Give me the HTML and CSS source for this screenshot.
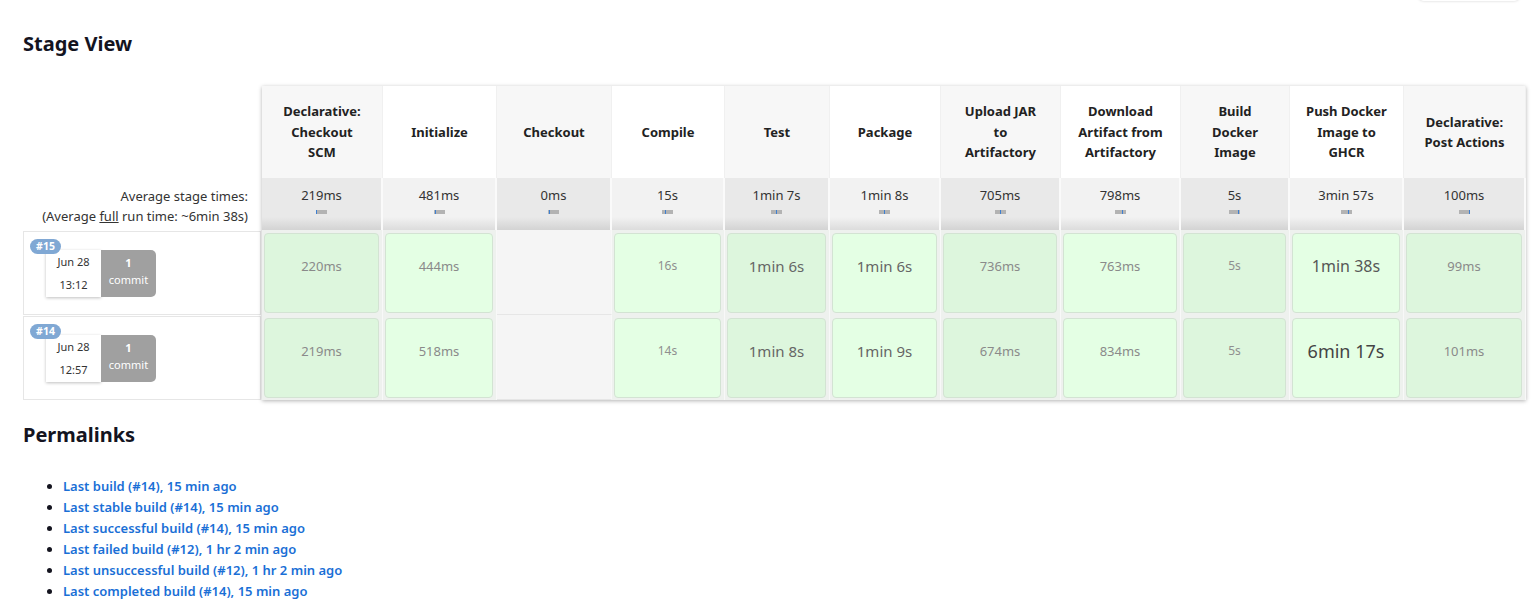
FILE: index.html
```html
<!DOCTYPE html>
<html lang="en">
<head>
<meta charset="utf-8">
<title>Stage View</title>
<link rel="stylesheet" href="styles.css">
</head>
<body>
<div class="page">
  <div class="top-menu"></div>

  <h2 class="section-title">Stage View</h2>

  <div class="stage-view">
    <div class="sv-left">
      <div class="sv-left-head"></div>
      <div class="sv-avg-label">Average stage times:<br>(Average <u>full</u> run time: ~6min 38s)</div>
      <div class="build-row">
        <div class="build-card">
          <span class="badge">#15</span>
          <div class="build-date">Jun 28<br>13:12</div>
          <div class="build-commits"><b>1</b><br>commit</div>
        </div>
      </div>
      <div class="build-row">
        <div class="build-card">
          <span class="badge">#14</span>
          <div class="build-date">Jun 28<br>12:57</div>
          <div class="build-commits"><b>1</b><br>commit</div>
        </div>
      </div>
    </div>

    <div class="sv-table">
      <div class="stage">
        <div class="stage-head">Declarative:<br>Checkout<br>SCM</div>
        <div class="stage-avg">219ms<i class="bar"><b style="left:0px"></b></i></div>
        <div class="stage-cell"><div class="box d-md">220ms</div></div>
        <div class="stage-cell"><div class="box d-md">219ms</div></div>
      </div>
      <div class="stage">
        <div class="stage-head">Initialize</div>
        <div class="stage-avg">481ms<i class="bar"><b style="left:1px"></b></i></div>
        <div class="stage-cell"><div class="box d-md">444ms</div></div>
        <div class="stage-cell"><div class="box d-md">518ms</div></div>
      </div>
      <div class="stage">
        <div class="stage-head">Checkout</div>
        <div class="stage-avg">0ms<i class="bar"><b style="left:1px"></b></i></div>
        <div class="stage-cell empty"></div>
        <div class="stage-cell empty"></div>
      </div>
      <div class="stage">
        <div class="stage-head">Compile</div>
        <div class="stage-avg">15s<i class="bar"><b style="left:3px"></b></i></div>
        <div class="stage-cell"><div class="box d-sm">16s</div></div>
        <div class="stage-cell"><div class="box d-sm">14s</div></div>
      </div>
      <div class="stage">
        <div class="stage-head">Test</div>
        <div class="stage-avg">1min 7s<i class="bar"><b style="left:5px"></b></i></div>
        <div class="stage-cell"><div class="box d-lg">1min 6s</div></div>
        <div class="stage-cell"><div class="box d-lg">1min 8s</div></div>
      </div>
      <div class="stage">
        <div class="stage-head">Package</div>
        <div class="stage-avg">1min 8s<i class="bar"><b style="left:5px"></b></i></div>
        <div class="stage-cell"><div class="box d-lg">1min 6s</div></div>
        <div class="stage-cell"><div class="box d-lg">1min 9s</div></div>
      </div>
      <div class="stage">
        <div class="stage-head">Upload JAR<br>to<br>Artifactory</div>
        <div class="stage-avg">705ms<i class="bar"><b style="left:5px"></b></i></div>
        <div class="stage-cell"><div class="box d-md">736ms</div></div>
        <div class="stage-cell"><div class="box d-md">674ms</div></div>
      </div>
      <div class="stage">
        <div class="stage-head">Download<br>Artifact from<br>Artifactory</div>
        <div class="stage-avg">798ms<i class="bar"><b style="left:7px"></b></i></div>
        <div class="stage-cell"><div class="box d-md">763ms</div></div>
        <div class="stage-cell"><div class="box d-md">834ms</div></div>
      </div>
      <div class="stage">
        <div class="stage-head">Build<br>Docker<br>Image</div>
        <div class="stage-avg">5s<i class="bar"><b style="left:9px"></b></i></div>
        <div class="stage-cell"><div class="box d-sm">5s</div></div>
        <div class="stage-cell"><div class="box d-sm">5s</div></div>
      </div>
      <div class="stage">
        <div class="stage-head">Push Docker<br>Image to<br>GHCR</div>
        <div class="stage-avg">3min 57s<i class="bar"><b style="left:7px"></b></i></div>
        <div class="stage-cell"><div class="box d-xl">1min 38s</div></div>
        <div class="stage-cell"><div class="box d-xxl">6min 17s</div></div>
      </div>
      <div class="stage">
        <div class="stage-head">Declarative:<br>Post Actions</div>
        <div class="stage-avg">100ms<i class="bar"><b style="left:10px"></b></i></div>
        <div class="stage-cell"><div class="box d-md">99ms</div></div>
        <div class="stage-cell"><div class="box d-md">101ms</div></div>
      </div>
    </div>
  </div>

  <h2 class="section-title permalinks-title">Permalinks</h2>
  <ul class="permalinks">
    <li><a href="#">Last build (#14), 15 min ago</a></li>
    <li><a href="#">Last stable build (#14), 15 min ago</a></li>
    <li><a href="#">Last successful build (#14), 15 min ago</a></li>
    <li><a href="#">Last failed build (#12), 1 hr 2 min ago</a></li>
    <li><a href="#">Last unsuccessful build (#12), 1 hr 2 min ago</a></li>
    <li><a href="#">Last completed build (#14), 15 min ago</a></li>
  </ul>
</div>
</body>
</html>
```
FILE: styles.css
```css
* { box-sizing: border-box; }

html, body {
  margin: 0;
  background: #fff;
}

body {
  font-family: "Noto Sans", "Open Sans", sans-serif;
  font-size: 13px;
  color: #333;
  overflow: hidden;
}

.page {
  position: relative;
  padding: 1px 23px 0;
}

.top-menu {
  position: absolute;
  top: -30px;
  right: 19px;
  width: 102px;
  height: 31px;
  border-radius: 6px;
  background: #fff;
  box-shadow: 0 0 3px rgba(0, 0, 0, 0.18);
}

.section-title {
  font-size: 20px;
  font-weight: 700;
  line-height: 24px;
  color: #14141f;
  margin: 31px 0 30px;
}

.permalinks-title {
  margin: 23px 0 29px;
}

/* ---------- stage view ---------- */
.stage-view {
  display: flex;
  align-items: flex-start;
}

.sv-left {
  flex: none;
  width: 239px;
}

.sv-left-head { height: 92px; }

.sv-avg-label {
  height: 52px;
  text-align: right;
  padding: 8px 14px 0 0;
  line-height: 20px;
  color: #333;
}

.build-row {
  height: 84px;
  margin-top: 1px;
  margin-right: 1px;
  border: 1px solid #e6e6e6;
  padding: 18px 0 0 22px;
}

.build-card {
  position: relative;
  display: flex;
  font-size: 11px;
  text-align: center;
}

.badge {
  position: absolute;
  left: -16px;
  top: -11px;
  width: 31px;
  height: 15px;
  border-radius: 8px;
  background: #80a8d4;
  color: #fff;
  font-size: 10.5px;
  font-weight: 700;
  line-height: 15px;
  text-align: center;
}

.build-date {
  width: 55px;
  height: 47px;
  background: #fff;
  color: #333;
  line-height: 23px;
  box-shadow: 0 1px 3px rgba(0, 0, 0, 0.25);
}

.build-commits {
  width: 55px;
  height: 47px;
  padding-top: 4px;
  background: #a0a0a0;
  color: #fff;
  line-height: 17px;
  border-radius: 0 5px 5px 0;
}

.sv-table {
  display: flex;
  background: #f3f3f3;
  box-shadow: 0 1px 4px rgba(0, 0, 0, 0.3);
}

.stage {
  display: flex;
  flex-direction: column;
  flex: none;
}

.stage:nth-child(1)  { width: 121px; }
.stage:nth-child(2)  { width: 114px; }
.stage:nth-child(3)  { width: 115px; }
.stage:nth-child(4)  { width: 113px; }
.stage:nth-child(5)  { width: 105px; }
.stage:nth-child(6)  { width: 111px; }
.stage:nth-child(7)  { width: 120px; }
.stage:nth-child(8)  { width: 120px; }
.stage:nth-child(9)  { width: 109px; }
.stage:nth-child(10) { width: 114px; }
.stage:nth-child(11) { width: 122px; }

.stage-head {
  height: 92px;
  display: flex;
  align-items: center;
  justify-content: center;
  text-align: center;
  font-weight: 700;
  line-height: 20.5px;
  color: #222;
  background: #fff;
  border-right: 1px solid #f0f0f0;
}

.stage:nth-child(odd) .stage-head { background: #f7f7f7; }

.stage-avg {
  height: 52px;
  padding-top: 7px;
  text-align: center;
  line-height: 20px;
  color: #333;
  background: linear-gradient(#f2f2f2 75%, #dcdcdc);
  border-right: 2px solid #fafafa;
}

.stage:nth-child(odd) .stage-avg {
  background: linear-gradient(#e9e9e9 75%, #d3d3d3);
}

.bar {
  position: relative;
  display: block;
  width: 11px;
  height: 4px;
  margin: 5px auto 0;
  background: #b3b3b3;
}

.bar b {
  position: absolute;
  top: 0;
  width: 1px;
  height: 4px;
  background: #3d7fd1;
}

.stage-cell {
  height: 85px;
  padding: 3px 3px 2px 2px;
  background: #eef1ee;
  border-right: 1px solid #f8f8f8;
}

.stage-cell.empty {
  padding: 0;
  background: #f5f5f5;
  border-bottom: 1px solid #e6e6e6;
}

.box {
  height: 100%;
  display: flex;
  align-items: center;
  justify-content: center;
  padding-bottom: 15px;
  border-radius: 4px;
  border: 1px solid #d3e3d3;
  background: #e4ffe4;
  white-space: nowrap;
}

.stage:nth-child(odd) .box { background: #ddf6dd; }

.d-sm  { font-size: 12px; color: #8f8f8f; }
.d-md  { font-size: 13px; color: #8a8a8a; }
.d-lg  { font-size: 15px; color: #666; }
.d-xl  { font-size: 16px; color: #575757; }
.d-xxl { font-size: 18px; color: #444; }

/* ---------- permalinks ---------- */
.permalinks {
  margin: 0;
  padding-left: 40px;
  color: #14141f;
}

.permalinks li {
  line-height: 21px;
  font-weight: 600;
}

.permalinks a {
  color: #1a6fd6;
  text-decoration: none;
}
```
